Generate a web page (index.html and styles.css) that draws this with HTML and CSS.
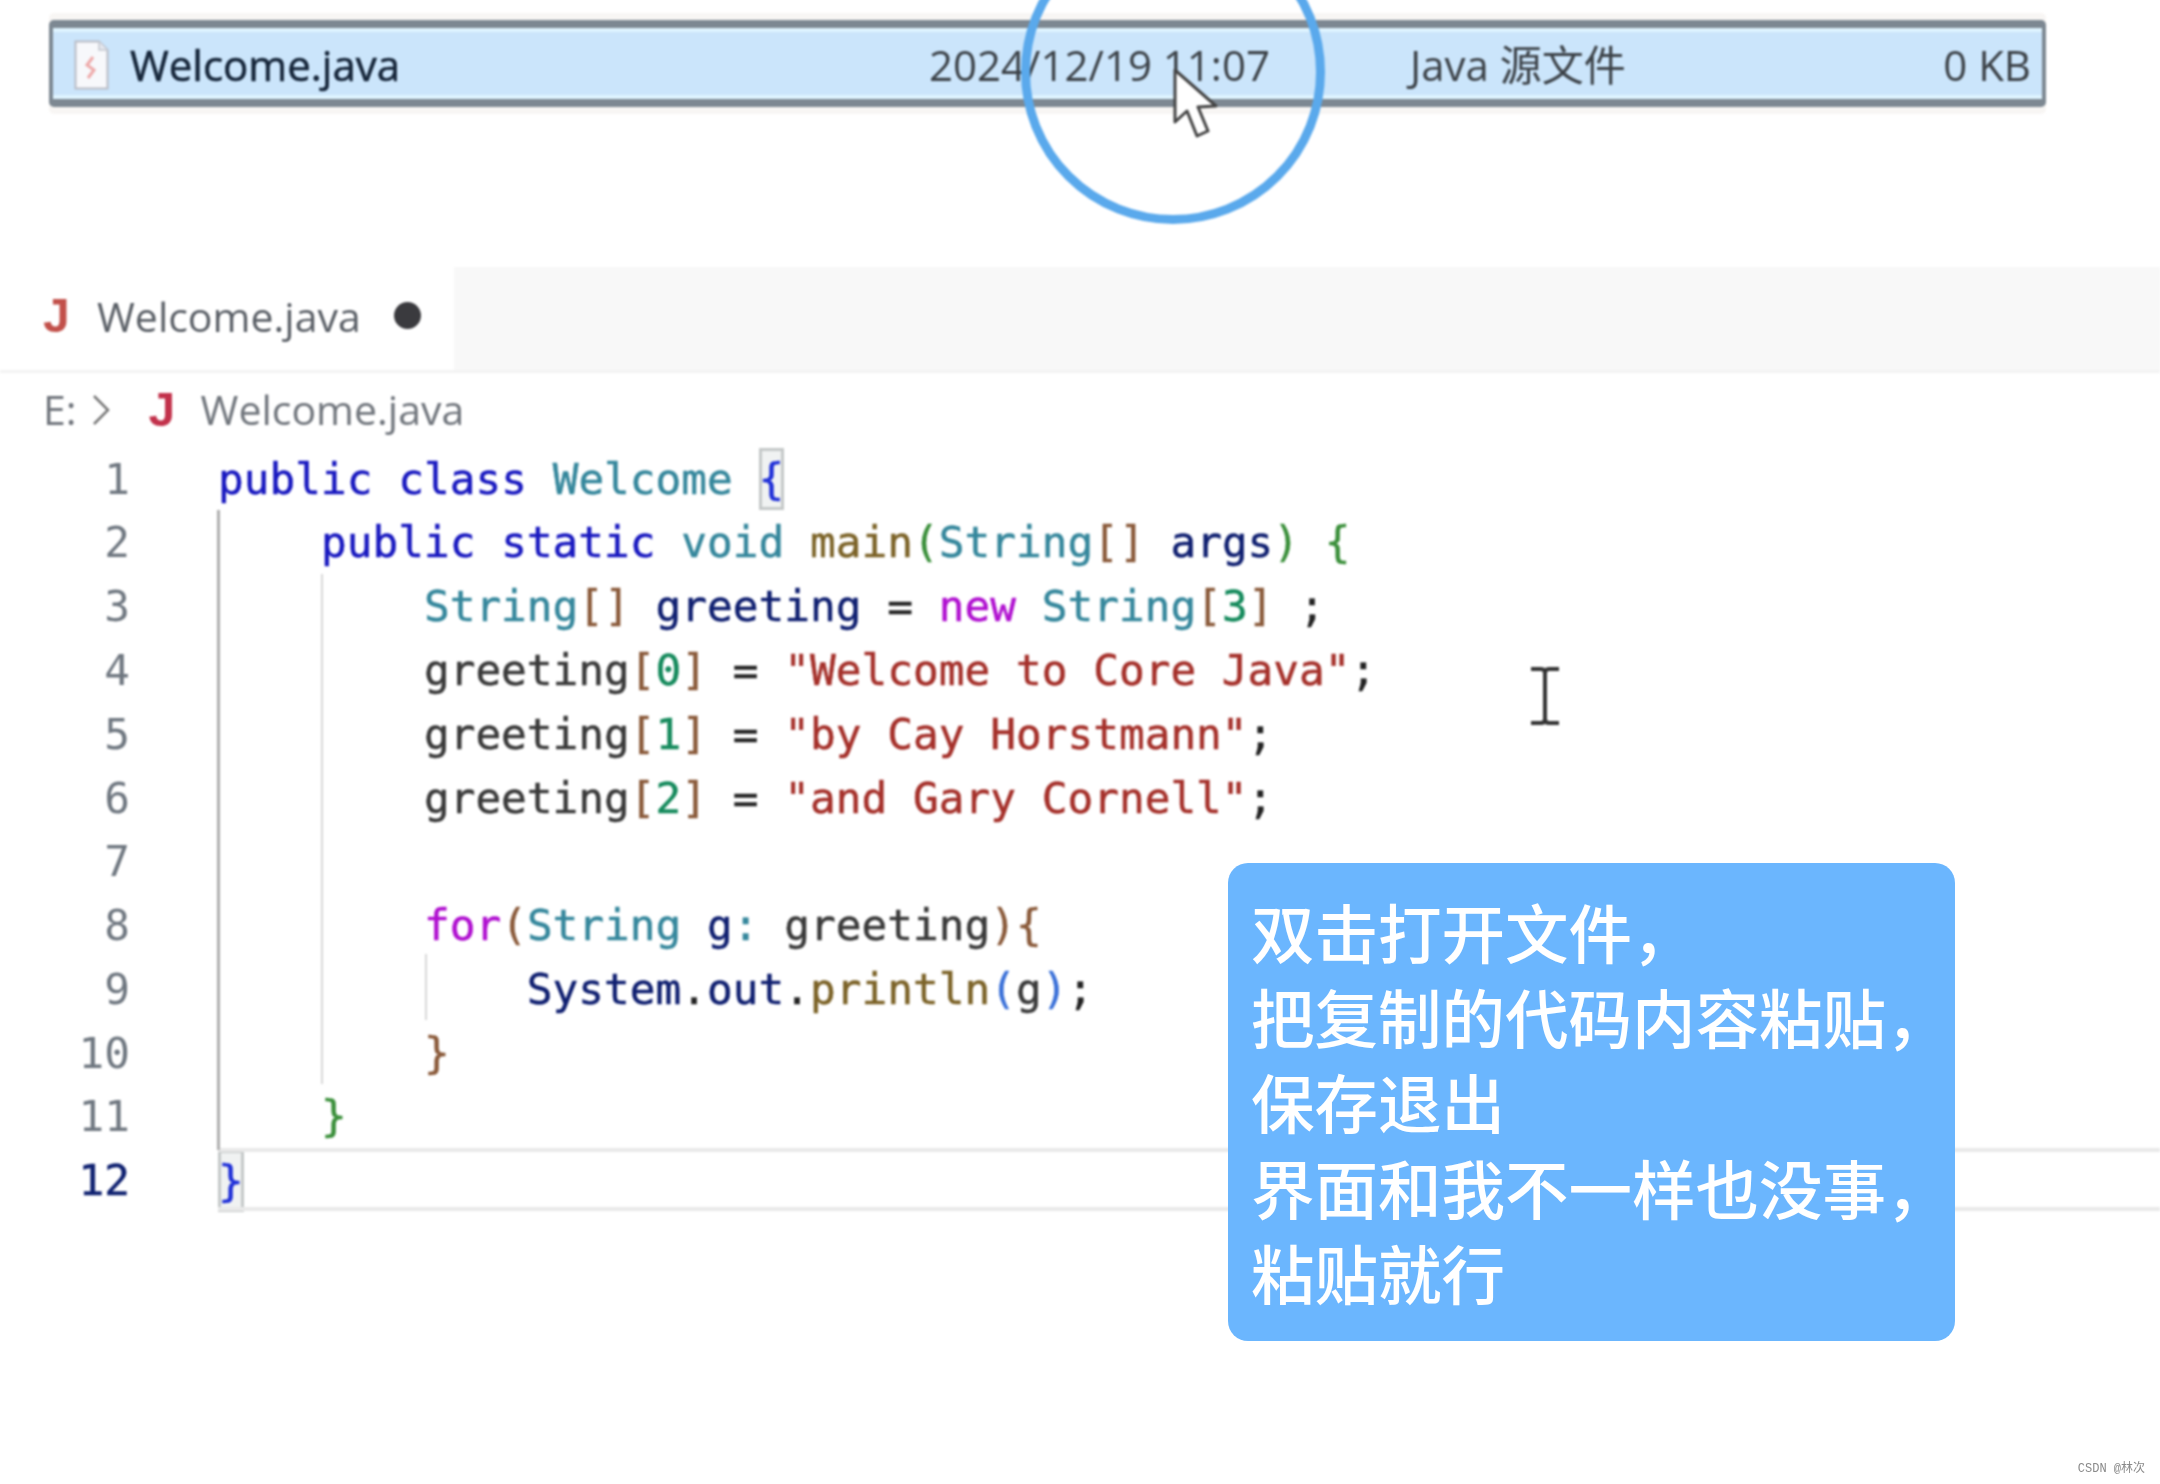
FILE: index.html
```html
<!DOCTYPE html>
<html lang="zh-CN">
<head>
<meta charset="utf-8">
<title>Welcome.java</title>
<link rel="stylesheet" href="styles.css">
</head>
<body>
<div class="page">
  <div class="video">
    <div class="file-row">
      <svg class="file-icon" viewBox="0 0 35 50"><path d="M1.500 1.500H25L33.500 10V48.500H1.500Z" fill="#f7f8fb" stroke="#b9bcc6" stroke-width="2"/><path d="M25 1.500V10H33.500" fill="#e4e7ee" stroke="#c4c7d0" stroke-width="1.500"/><path d="M19 17L13 25L20 30L14 38" fill="none" stroke="#eeaaaa" stroke-width="3"/></svg>
      <span class="file-name">Welcome.java</span>
      <span class="file-date">2024/12/19 11:07</span>
      <span class="file-type">Java 源文件</span>
      <span class="file-size">0 KB</span>
    </div>

    <div class="tabs">
      <div class="tab">
        <span class="j-icon tab-j">J</span>
        <span class="tab-name">Welcome.java</span>
        <span class="dirty"></span>
      </div>
    </div>

    <div class="crumbs">
      <span class="crumb-drive">E:</span>
      <svg class="chevron" viewBox="0 0 18 30"><path d="M2 1L16 15L2 29" fill="none" stroke="#777" stroke-width="2.500"/></svg>
      <span class="j-icon crumb-j">J</span>
      <span class="crumb-name">Welcome.java</span>
    </div>

    <div class="editor">
      <div class="line"><span class="num">1</span><code class="code"><i class="kw">public</i> <i class="kw">class</i> <i class="ty">Welcome</i> <i class="b1 match">{</i></code></div>
      <div class="line"><span class="num">2</span><code class="code">    <i class="kw">public</i> <i class="kw">static</i> <i class="ty">void</i> <i class="fn">main</i><i class="b2">(</i><i class="ty">String</i><i class="b3">[]</i> <i class="var">args</i><i class="b2">)</i> <i class="b2">{</i></code></div>
      <div class="line"><span class="num">3</span><code class="code">        <i class="ty">String</i><i class="b3">[]</i> <i class="var">greeting</i> <i class="op">=</i> <i class="ctl">new</i> <i class="ty">String</i><i class="b3">[</i><i class="lit">3</i><i class="b3">]</i> <i class="op">;</i></code></div>
      <div class="line"><span class="num">4</span><code class="code">        <i class="plain">greeting</i><i class="b3">[</i><i class="lit">0</i><i class="b3">]</i> <i class="op">=</i> <i class="str">"Welcome to Core Java"</i><i class="op">;</i></code></div>
      <div class="line"><span class="num">5</span><code class="code">        <i class="plain">greeting</i><i class="b3">[</i><i class="lit">1</i><i class="b3">]</i> <i class="op">=</i> <i class="str">"by Cay Horstmann"</i><i class="op">;</i></code></div>
      <div class="line"><span class="num">6</span><code class="code">        <i class="plain">greeting</i><i class="b3">[</i><i class="lit">2</i><i class="b3">]</i> <i class="op">=</i> <i class="str">"and Gary Cornell"</i><i class="op">;</i></code></div>
      <div class="line"><span class="num">7</span><code class="code"> </code></div>
      <div class="line"><span class="num">8</span><code class="code">        <i class="ctl">for</i><i class="b3">(</i><i class="ty">String</i> <i class="var">g</i><i class="ty">:</i> <i class="plain">greeting</i><i class="b3">){</i></code></div>
      <div class="line"><span class="num">9</span><code class="code">            <i class="var">System</i><i class="op">.</i><i class="var">out</i><i class="op">.</i><i class="fn">println</i><i class="b4">(</i><i class="plain">g</i><i class="b4">)</i><i class="op">;</i></code></div>
      <div class="line"><span class="num">10</span><code class="code">        <i class="b3">}</i></code></div>
      <div class="line"><span class="num">11</span><code class="code">    <i class="b2">}</i></code></div>
      <div class="line current"><span class="num">12</span><code class="code"><i class="b1 match">}</i></code></div>

      <span class="guide g1"></span>
      <span class="guide g2"></span>
      <span class="guide g3"></span>
    </div>

    <svg class="ibeam" viewBox="0 0 34 58"><path d="M3 2H13Q17 2 17 6V52Q17 56 13 56H3M31 2H21Q17 2 17 6V52Q17 56 21 56H31" fill="none" stroke="#333" stroke-width="4"/></svg>
    <span class="ring"></span>
    <svg class="cursor" viewBox="0 0 46 72"><path d="M2 2V54L14 43L24 68L35 63L25 39L43 38Z" fill="#fff" stroke="#444" stroke-width="3" stroke-linejoin="round"/></svg>
  </div>

  <div class="callout">
    <p class="callout-line">双击打开文件<span class="comma">，</span></p>
    <p class="callout-line">把复制的代码内容粘贴<span class="comma">，</span></p>
    <p class="callout-line">保存退出</p>
    <p class="callout-line">界面和我不一样也没事<span class="comma">，</span></p>
    <p class="callout-line">粘贴就行</p>
  </div>
  <span class="watermark">CSDN @林次</span>
</div>
</body>
</html>
```

FILE: styles.css
```css
* { box-sizing: border-box; }

html, body {
  margin: 0;
  background: #fff;
}

.page {
  position: relative;
  width: 2160px;
  height: 1484px;
  overflow: hidden;
  background: #fff;
}

.video {
  position: relative;
  height: 100%;
  padding-top: 20px;
  filter: blur(0.9px);
}

.file-row {
  display: grid;
  grid-template-columns: 56px 799px 481px 1fr auto;
  align-items: center;
  width: 1997px;
  height: 87px;
  margin-left: 49px;
  padding: 2px 11px 0 21px;
  border: solid #7d8892;
  border-width: 8px 4px;
  border-radius: 5px;
  background: #cbe5fb;
  box-shadow: inset 0 4px 0 #dff4ff, inset 0 -4px 0 #dff4ff, 0 -7px 0 #f8f6f4, 0 7px 0 #f8f6f4;
  font: 42px/1 "Open Sans", "Noto Sans CJK SC", sans-serif;
  color: #3c4248;
}

.file-icon {
  width: 35px;
  height: 50px;
}

.file-name {
  color: #16263a;
  -webkit-text-stroke: 0.6px #16263a;
}

.tabs {
  height: 106px;
  margin-top: 160px;
  background: #f8f8f8;
  border-bottom: 3px solid #f3f3f3;
}

.tab {
  display: flex;
  align-items: center;
  width: 454px;
  height: 103px;
  padding: 0 0 4px 43px;
  background: #fff;
  font: 41px/1 "Open Sans", sans-serif;
  color: #5a5f66;
}

.j-icon {
  width: 27px;
  font: 700 48px/1 "Liberation Sans", sans-serif;
  color: #c2504a;
}

.tab-j {
  margin-top: -2px;
}

.tab-name {
  margin-left: 27px;
}

.dirty {
  width: 27px;
  height: 27px;
  margin: -2px 0 0 33px;
  border-radius: 50%;
  background: #3a3a3e;
}

.crumbs {
  display: flex;
  align-items: center;
  height: 73px;
  padding-left: 43px;
  font: 41px/1 "Open Sans", sans-serif;
  color: #70757c;
}

.chevron {
  width: 18px;
  height: 30px;
  margin-left: 15px;
}

.crumb-j {
  width: 27px;
  margin-left: 39px;
  color: #c2314b;
}

.crumb-name {
  margin-left: 25px;
}

.editor {
  position: relative;
  padding-top: 1px;
}

.line {
  display: flex;
  align-items: center;
  height: 63.800px;
  font: 42.750px/1 "DejaVu Sans Mono", monospace;
}

.num {
  flex: none;
  width: 130px;
  text-align: right;
  color: #6f7780;
}

.code {
  flex: none;
  margin-left: 88px;
  font: inherit;
  white-space: pre;
  color: #333;
  -webkit-text-stroke: 0.5px currentColor;
}

.code i {
  font-style: normal;
}

.current {
  position: relative;
}

.current::after {
  content: "";
  position: absolute;
  left: 218px;
  right: 0;
  top: -1px;
  bottom: 2px;
  border: solid #e9e9e9;
  border-width: 4px 0;
  pointer-events: none;
}

.current .num {
  color: #0f2170;
  -webkit-text-stroke: 0.5px currentColor;
}

.kw { color: #1919c0; }
.ty { color: #35879c; }
.fn { color: #7c6328; }
.var { color: #0f1f70; }
.plain { color: #3a3a3a; }
.op { color: #222; }
.ctl { color: #b010d0; }
.str { color: #a5302a; }
.lit { color: #158a5c; }
.b1 { color: #2030d8; }
.b2 { color: #3a8f3a; }
.b3 { color: #8a5a3a; }
.b4 { color: #3a70d8; }

.match {
  display: inline-block;
  background: #f0f2f2;
  box-shadow: inset 0 0 0 3px #c4c8c8;
  line-height: 62px;
}

.guide {
  position: absolute;
  background: #d8d8d8;
  width: 2px;
}

.g1 {
  left: 217px;
  top: 64px;
  height: 640px;
  width: 3px;
  background: #aeaeae;
}

.g2 {
  left: 321px;
  top: 128px;
  height: 510px;
}

.g3 {
  left: 425px;
  top: 508px;
  height: 66px;
}

.ring {
  position: absolute;
  left: 1021px;
  top: -80px;
  width: 304px;
  height: 304px;
  border: 9px solid #5aa9ec;
  border-radius: 50%;
}

.cursor {
  position: absolute;
  left: 1173px;
  top: 68px;
  width: 46px;
  height: 72px;
}

.ibeam {
  position: absolute;
  left: 1528px;
  top: 667px;
  width: 34px;
  height: 58px;
}

.callout {
  position: absolute;
  left: 1228px;
  top: 863px;
  width: 727px;
  height: 478px;
  padding: 25px 0 0 23px;
  border-radius: 20px;
  background: #6bb6fe;
  color: #fff;
  font: 500 63.500px/85.200px "Noto Sans CJK SC", sans-serif;
  white-space: nowrap;
}

.callout-line {
  margin: 0;
}

.watermark {
  position: absolute;
  right: 15px;
  bottom: 9px;
  font: 12px/1 "Liberation Mono", "Noto Sans CJK SC", monospace;
  color: #8a8a8a;
}
```
